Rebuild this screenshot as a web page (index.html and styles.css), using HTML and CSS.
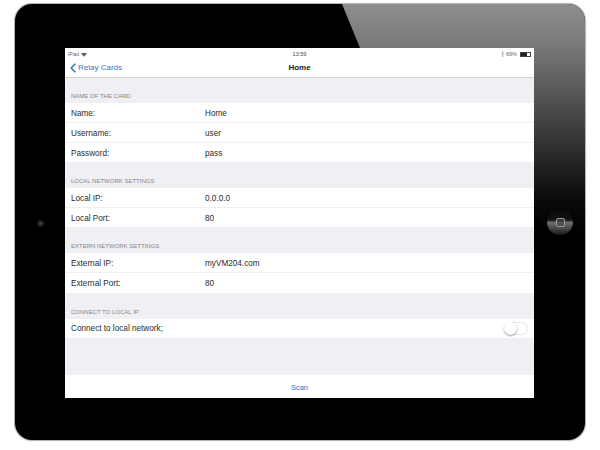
FILE: index.html
```html
<!DOCTYPE html>
<html lang="en">
<head>
<meta charset="utf-8">
<title>Home</title>
<link rel="stylesheet" href="styles.css">
</head>
<body>
<div class="device">
  <div class="glare"></div>
  <div class="bezel bezel-left"><span class="camera"></span></div>
  <main class="screen">
    <div class="status">
      <div class="status-left">
        <span>iPad</span>
        <svg class="wifi" width="6" height="5" viewBox="0 0 8 6"><path d="M4 6L0 2C2.300.2 5.700.2 8 2Z" fill="#666"/></svg>
      </div>
      <span class="status-time">13:59</span>
      <div class="status-right">
        <svg width="3" height="6" viewBox="0 0 3 6"><path d="M0 1.500L3 4.500 1.500 6V0L3 1.500 0 4.500" fill="none" stroke="#999" stroke-width=".5"/></svg>
        <span>69%</span>
        <span class="battery"><span class="battery-fill"></span></span>
      </div>
    </div>
    <nav class="nav">
      <div class="back">
        <svg width="6" height="10" viewBox="0 0 6 10"><path d="M5.300.8L1.200 5 5.300 9.200" fill="none" stroke="#2f78c4" stroke-width="1.600"/></svg>
        <span>Relay Cards</span>
      </div>
      <h1 class="title">Home</h1>
    </nav>
    <div class="content">
      <h2 class="section section-first">NAME OF THE CARD</h2>
      <div class="group">
        <div class="row"><span class="label">Name:</span><span>Home</span></div>
        <div class="row"><span class="label">Username:</span><span>user</span></div>
        <div class="row"><span class="label">Password:</span><span>pass</span></div>
      </div>
      <h2 class="section">LOCAL NETWORK SETTINGS</h2>
      <div class="group">
        <div class="row"><span class="label">Local IP:</span><span>0.0.0.0</span></div>
        <div class="row"><span class="label">Local Port:</span><span>80</span></div>
      </div>
      <h2 class="section">EXTERN NETWORK SETTINGS</h2>
      <div class="group">
        <div class="row"><span class="label">External IP:</span><span>myVM204.com</span></div>
        <div class="row row-tall"><span class="label">External Port:</span><span>80</span></div>
      </div>
      <h2 class="section">CONNECT TO LOCAL IP</h2>
      <div class="group">
        <div class="row row-switch"><span class="label">Connect to local network;</span><span class="switch"><span class="knob"></span></span></div>
      </div>
    </div>
    <footer class="toolbar">Scan</footer>
  </main>
  <div class="bezel bezel-right"><span class="home"><span class="home-square"></span></span></div>
</div>
</body>
</html>
```

FILE: styles.css
```css
* { box-sizing: border-box; }

html, body { margin: 0; height: 100%; background: #fff; }

body {
  padding: 4px 15px 10px;
  font-family: "Liberation Sans", Arial, sans-serif;
  color: #222;
}

.device {
  position: relative;
  display: flex;
  width: 570px;
  height: 436px;
  padding: 44px 0 42px;
  background: #000;
  border-radius: 17px;
  overflow: hidden;
  box-shadow: 0 0 1px 1px rgba(110, 110, 110, .55);
}

.glare {
  position: absolute;
  inset: 0;
  background: linear-gradient(180deg, #8e8e8e 0, #777 44px, #3c3c3c 126px, #0a0a0a 195px, #000 230px);
  clip-path: polygon(327px 0, 570px 0, 570px 260px, 345px 44px);
}

.bezel {
  position: relative;
  flex: 0 0 auto;
  display: flex;
  align-items: center;
  justify-content: center;
}

.bezel-left { width: 50px; }
.bezel-right { width: 51px; padding: 0 0 2px 1px; }

.camera {
  width: 7px;
  height: 7px;
  border-radius: 50%;
  background: radial-gradient(circle, #3c3f45 0, #1d1f23 55%, #050505 100%);
}

.home {
  display: flex;
  align-items: center;
  justify-content: center;
  width: 26px;
  height: 26px;
  border-radius: 50%;
  background: linear-gradient(180deg, #0a0a0a 0, #121212 42%, #6e6e6e 52%, #484848 75%, #161616 100%);
}

.home-square {
  width: 9px;
  height: 9px;
  border: 1px solid #9a9a9a;
  border-radius: 2px;
  background: rgba(70, 70, 70, .6);
}

.screen {
  position: relative;
  flex: 1;
  display: flex;
  flex-direction: column;
  background: #efeff4;
  overflow: hidden;
}

.status {
  display: flex;
  align-items: center;
  justify-content: space-between;
  height: 12px;
  padding: 0 3px;
  background: #fff;
  font-size: 5.500px;
  color: #666;
}

.status-left, .status-right { display: flex; align-items: center; gap: 2px; width: 90px; }
.status-right { justify-content: flex-end; }
.status-time { color: #444; }

.battery {
  display: block;
  width: 11px;
  height: 5px;
  margin-left: 1px;
  border: 1px solid #444;
  background: #fff;
}

.battery-fill { display: block; width: 69%; height: 100%; background: #222; }

.nav {
  position: relative;
  display: flex;
  align-items: center;
  justify-content: center;
  height: 18px;
  background: #fff;
  border-bottom: 1px solid #d4d4d8;
}

.back {
  position: absolute;
  left: 5px;
  top: 0;
  bottom: 2px;
  display: flex;
  align-items: center;
  gap: 2px;
  font-size: 8px;
  color: #2f78c4;
}

.title { margin: 0 0 2px; font-size: 8px; font-weight: 700; color: #222; }

.content { flex: 1; display: flex; flex-direction: column; }

.section {
  display: flex;
  align-items: flex-end;
  height: 26px;
  margin: 0;
  padding: 0 6px 4px;
  font-size: 6px;
  font-weight: 400;
  color: #85858a;
}

.section-first { height: 25px; }

.group { background: #fff; }

.row {
  display: grid;
  grid-template-columns: 134px 1fr;
  align-items: center;
  height: 20px;
  padding: 1px 0 0 6px;
  font-size: 8.200px;
  color: #2b2b2b;
  border-bottom: 1px solid #efeff1;
}

.row:last-child { border-bottom: 0; height: 19px; }
.row.row-tall { height: 20px; }

.row-switch { display: flex; justify-content: space-between; padding: 0 6px; }

.label { color: #2b2b2b; }

.switch {
  display: block;
  width: 24px;
  height: 13px;
  border: 1px solid #e6e6e6;
  border-radius: 7px;
  background: #fff;
}

.knob {
  display: block;
  width: 13px;
  height: 13px;
  margin: -1px 0 0 -1px;
  border-radius: 50%;
  background: #fff;
  box-shadow: 0 1px 2px rgba(0, 0, 0, .4);
}

.toolbar {
  display: flex;
  align-items: center;
  justify-content: center;
  height: 23px;
  padding-top: 2px;
  background: #fff;
  font-size: 7.500px;
  color: #2a78c8;
}
```
